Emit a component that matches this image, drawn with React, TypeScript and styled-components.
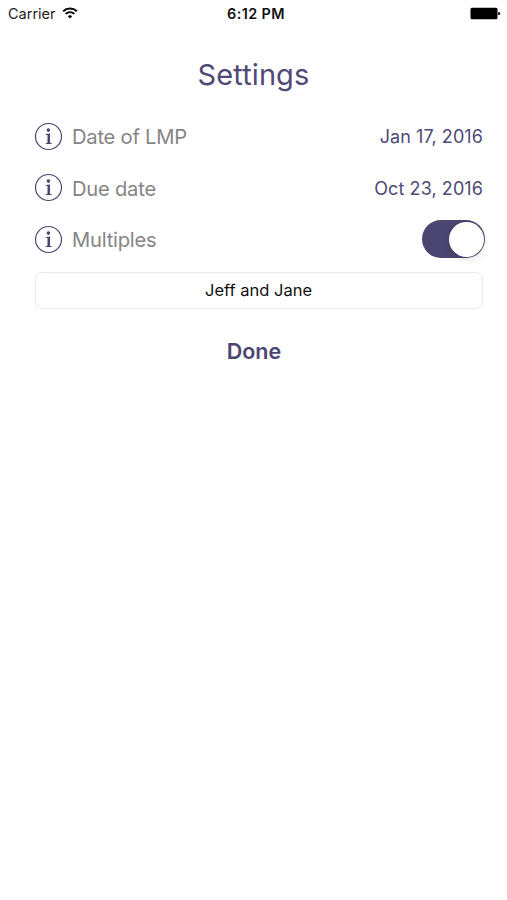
import React, { useState } from 'react';
import styled, { createGlobalStyle } from 'styled-components';

const Global = createGlobalStyle`
  * { box-sizing: border-box; }
  body { margin: 0; background: #fff; font-family: Inter, "Liberation Sans", sans-serif; }
`;
const Screen = styled.div`
  width: 507px; height: 900px; display: flex; flex-direction: column; background: #fff; overflow: hidden;
`;
const StatusBar = styled.header`
  height: 27px; padding: 0 6px 0 8px; display: grid; grid-template-columns: 1fr auto 1fr; align-items: center; color: #000;
`;
const Carrier = styled.div`
  display: flex; align-items: center; gap: 6px; font-size: 14.5px; color: #222;
  svg { margin-bottom: 2px; }
`;
const Clock = styled.div`
  padding-left: 3px; font-size: 14.4px; font-weight: 600; letter-spacing: 0.4px; color: #111;
`;
const Battery = styled.svg`
  justify-self: end; display: block;
`;
const Title = styled.h1`
  margin: 28px 0 0; height: 40px; line-height: 40px; text-align: center; font-size: 29px; font-weight: 400; color: #4f4a76;
  letter-spacing: 0.1px;
`;
const Form = styled.main`
  padding: 16px 24px 0 34px; display: flex; flex-direction: column;
`;
const Row = styled.div`
  height: 51.3px; display: flex; align-items: center;
`;
const Label = styled.span`
  flex: 1; margin-left: 9px; padding-top: 0.4px; font-size: 20.2px; color: #858585; letter-spacing: -0.24px;
`;
const DateValue = styled.span`
  padding-top: 0.4px; font-size: 18px; letter-spacing: 0.08px; color: #4f4a76;
`;
const Toggle = styled.button<{ $on: boolean }>`
  width: 63px; height: 38px; margin-right: -2px; padding: 1.5px; border: 0; border-radius: 19px; display: flex; align-items: center;
  justify-content: ${p => (p.$on ? 'flex-end' : 'flex-start')}; background: ${p => (p.$on ? '#4b4671' : '#ddd')};
`;
const Knob = styled.span`
  width: 35px; height: 35px; border-radius: 50%; background: #fff; box-shadow: 0 3px 6px rgba(0,0,0,.13);
`;
const NameInput = styled.input`
  width: 448px; height: 37px; margin: 7px 0 0 0.5px; padding: 0 0 1px; border: 1px solid #ebebeb; border-radius: 7px;
  text-align: center; font: 16.5px Inter, sans-serif; color: #111; background: #fff; outline: 0;
`;
const Done = styled.button`
  align-self: center; margin: 26px 9px 0 0; padding: 0; border: 0; background: none; height: 32px;
  font: 600 21.5px Inter, sans-serif; color: #4b4671;
`;

const Info = () => (
  <svg width="29" height="29" viewBox="0 0 29 29" fill="#4b4671">
    <circle cx="14.5" cy="14.5" r="13" fill="none" stroke="#4b4671" strokeWidth="1.2" />
    <circle cx="14.4" cy="8.1" r="1.8" />
    <path d="M11.7 11.9l4.3-.4v9.2l1.7.5v.8h-5.9v-.8l1.7-.5v-7.6l-1.8-.4z" />
  </svg>
);
const Wifi = () => (
  <svg width="16" height="12" viewBox="0 0 16 12" fill="none" stroke="#000" strokeWidth="1.9">
    <path d="M1.2 4.2a9.8 9.8 0 0 1 13.6 0M3.6 6.9a6.3 6.3 0 0 1 8.8 0" />
    <path d="M8 11.5 5.8 9.2a3.2 3.2 0 0 1 4.4 0z" fill="#000" stroke="none" />
  </svg>
);

export default function App() {
  const [multiples, setMultiples] = useState(true);
  const [names, setNames] = useState('Jeff and Jane');
  return (
    <>
      <Global />
      <Screen>
        <StatusBar>
          <Carrier>Carrier <Wifi /></Carrier>
          <Clock>6:12 PM</Clock>
          <Battery width="31" height="13" viewBox="0 0 31 13">
            <rect x="0.5" y="0.7" width="27" height="11.6" rx="1.5" />
            <path d="M28.2 5h.5a1.5 1.5 0 0 1 0 3h-.5z" />
          </Battery>
        </StatusBar>
        <Title>Settings</Title>
        <Form>
          <Row><Info /><Label>Date of LMP</Label><DateValue>Jan 17, 2016</DateValue></Row>
          <Row><Info /><Label>Due date</Label><DateValue>Oct 23, 2016</DateValue></Row>
          <Row><Info /><Label>Multiples</Label>
            <Toggle $on={multiples} aria-label="Multiples" onClick={() => setMultiples(!multiples)}><Knob /></Toggle>
          </Row>
          <NameInput aria-label="Names" value={names} onChange={e => setNames(e.target.value)} />
          <Done>Done</Done>
        </Form>
      </Screen>
    </>
  );
}
